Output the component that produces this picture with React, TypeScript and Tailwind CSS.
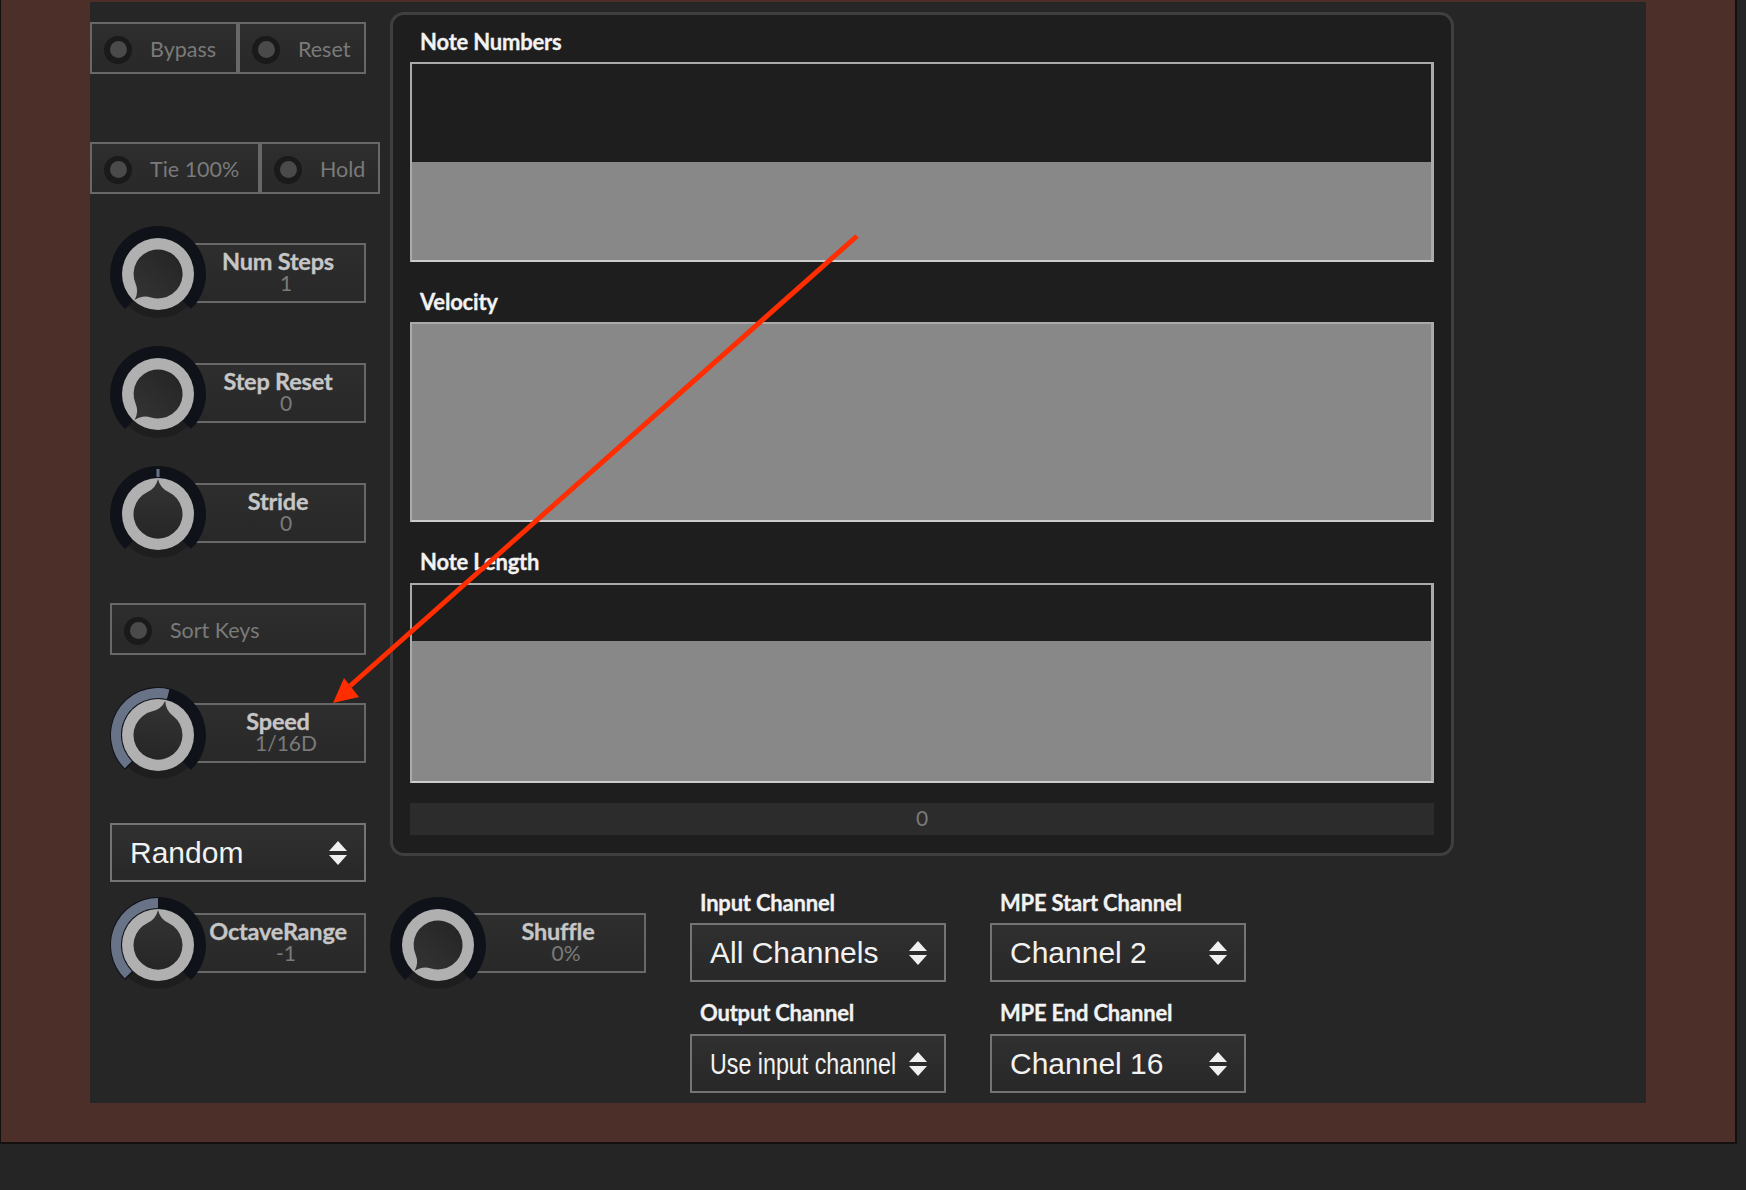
import React from "react";

const polar = (r: number, deg: number) => {
  const a = ((deg - 90) * Math.PI) / 180;
  return [48 + r * Math.cos(a), 48 + r * Math.sin(a)];
};

const arcBand = (r1: number, r2: number, from: number, to: number) => {
  const large = to - from > 180 ? 1 : 0;
  const [ax, ay] = polar(r2, from);
  const [bx, by] = polar(r2, to);
  const [cx, cy] = polar(r1, to);
  const [dx, dy] = polar(r1, from);
  return `M${ax} ${ay}A${r2} ${r2} 0 ${large} 1 ${bx} ${by}L${cx} ${cy}A${r1} ${r1} 0 ${large} 0 ${dx} ${dy}Z`;
};

function Knob({ pointer, value, tick }: { pointer: number; value?: number; tick?: boolean }) {
  return (
    <svg viewBox="0 0 96 100" className="relative z-10 w-[96px] h-[100px] shrink-0">
      <defs>
        <linearGradient id="knobFace" x1="0" y1="0" x2="0" y2="1">
          <stop offset="0" stopColor="#343434" />
          <stop offset="1" stopColor="#262626" />
        </linearGradient>
      </defs>
      <path d={arcBand(34, 44, 135, 225)} fill="#1e1e1e" />
      <path d={arcBand(35, 48, -137, 137)} fill="#10121a" />
      {value !== undefined && <path d={arcBand(37, 47, -135, value)} fill="#697387" />}
      {tick && <rect x="46.5" y="3" width="3" height="8" fill="#697387" />}
      <circle cx="48" cy="48" r="36" fill="#b0b0b0" />
      <g transform={`rotate(${pointer} 48 48)`}>
        <path d="M48 13Q46 22 37.5 26A24.5 24.5 0 1 0 58.5 26Q50 22 48 13Z" fill="url(#knobFace)" />
      </g>
    </svg>
  );
}

function Led() {
  return (
    <span className="flex items-center justify-center w-[28px] h-[28px] rounded-full bg-[#1a1a1a] shrink-0">
      <span className="block w-[17px] h-[17px] rounded-full bg-[#4a4a4a]" />
    </span>
  );
}

function Toggle({ label, width, className = "" }: { label: string; width: string; className?: string }) {
  return (
    <div
      className={`flex items-center gap-[18px] pl-[12px] pt-[3px] h-[52px] border-2 border-[#686868] bg-linear-to-b from-[#2e2e2e] to-[#282828] ${width} ${className}`}
    >
      <Led />
      <span className="text-[21.5px] text-[#7a7a7a] font-['Lato',sans-serif] whitespace-nowrap">{label}</span>
    </div>
  );
}

function KnobRow({
  label,
  val,
  pointer,
  value,
  tick,
  boxTop = "mt-[17px]",
  className = "",
}: {
  label: string;
  val: string;
  pointer: number;
  value?: number;
  tick?: boolean;
  boxTop?: string;
  className?: string;
}) {
  return (
    <div className={`flex w-[256px] h-[96px] ${className}`}>
      <Knob pointer={pointer} value={value} tick={tick} />
      <div
        className={`ml-[-16px] ${boxTop} flex-1 h-[60px] border-2 border-[#686868] bg-linear-to-b from-[#2e2e2e] to-[#282828] flex flex-col items-center justify-center pb-[2px] font-['Lato',sans-serif] whitespace-nowrap`}
      >
        <span className="text-[23.5px] leading-[22px] font-bold text-[#c6c6c6] tracking-[-0.2px] [-webkit-text-stroke:0.3px]">
          {label}
        </span>
        <span className="text-[21px] leading-[22px] text-[#7a7a7a] pl-[16px]">{val}</span>
      </div>
    </div>
  );
}

function Updown() {
  return (
    <svg viewBox="0 0 18 24" className="w-[18px] h-[24px] shrink-0">
      <path d="M9 0L18 10H0Z" fill="#f0f0f0" />
      <path d="M0 14H18L9 24Z" fill="#f0f0f0" />
    </svg>
  );
}

function Select({ text, squeeze }: { text: string; squeeze?: boolean }) {
  return (
    <div className="flex items-center justify-between w-[256px] h-[59px] border-2 border-[#747474] pl-[18px] pr-[17px] bg-linear-to-b from-[#303030] to-[#282828] font-['Liberation_Sans',sans-serif] text-[#f2f2f2] text-[30px]">
      {squeeze ? (
        <span className="whitespace-nowrap inline-block scale-x-[0.775] origin-left w-[185px] pb-[1px]">{text}</span>
      ) : (
        <span className="whitespace-nowrap pb-[1px]">{text}</span>
      )}
      <Updown />
    </div>
  );
}

function Slider({ fill }: { fill: string }) {
  return (
    <div className="flex flex-col w-[1024px] h-[200px] border-2 border-r-[3px] border-[#aaaaaa] border-b-[#cccccc] bg-[#1e1e1e]">
      <div className="flex-1" />
      <div className={`bg-[#888888] ${fill}`} />
    </div>
  );
}

function SectionLabel({ children, className = "" }: { children: React.ReactNode; className?: string }) {
  return (
    <div
      className={`h-[30px] leading-[30px] pl-[10px] text-[22px] font-bold text-[#f2f2f2] font-['Lato',sans-serif] tracking-[-0.2px] [-webkit-text-stroke:0.3px] ${className}`}
    >
      {children}
    </div>
  );
}

export default function App() {
  return (
    <div className="relative w-full h-[1190px] bg-[#252525] overflow-hidden">
      <div className="w-[1737px] h-[1144px] border-l border-r-2 border-b-2 border-[#141010] bg-[#4c2f28] pt-[2px] pl-[89px]">
        <div className="flex w-[1556px] h-[1101px] bg-[#262626]">
          <div className="flex flex-col w-[300px] pt-[20px]">
            <div className="flex">
              <Toggle label="Bypass" width="w-[148px]" />
              <Toggle label="Reset" width="w-[128px]" />
            </div>
            <div className="flex mt-[68px]">
              <Toggle label="Tie 100%" width="w-[170px]" />
              <Toggle label="Hold" width="w-[120px]" />
            </div>
            <div className="flex flex-col gap-[24px] mt-[32px] ml-[20px]">
              <KnobRow label="Num Steps" val="1" pointer={-138} />
              <KnobRow label="Step Reset" val="0" pointer={-138} />
              <KnobRow label="Stride" val="0" pointer={0} tick />
            </div>
            <Toggle label="Sort Keys" width="w-[256px]" className="ml-[20px] mt-[41px]" />
            <KnobRow
              label="Speed"
              val="1/16D"
              pointer={12}
              value={14}
              boxTop="mt-[16px]"
              className="ml-[20px] mt-[32px]"
            />
            <div className="ml-[20px] mt-[40px]">
              <Select text="Random" />
            </div>
            <KnobRow
              label="OctaveRange"
              val="-1"
              pointer={0}
              value={0}
              boxTop="mt-[16px]"
              className="ml-[20px] mt-[15px]"
            />
          </div>

          <div className="flex flex-col pt-[10px]">
            <div className="w-[1064px] h-[844px] rounded-[14px] border-[3px] border-[#3f3f3f] bg-[#1e1e1e] pl-[17px] pt-[12px]">
              <SectionLabel>Note Numbers</SectionLabel>
              <div className="mt-[5px]">
                <Slider fill="h-[98px]" />
              </div>
              <SectionLabel className="mt-[25px]">Velocity</SectionLabel>
              <div className="mt-[5px]">
                <Slider fill="h-[196px]" />
              </div>
              <SectionLabel className="mt-[25px]">Note Length</SectionLabel>
              <div className="mt-[6px]">
                <Slider fill="h-[140px]" />
              </div>
              <div className="mt-[20px] w-[1024px] h-[32px] bg-[#2c2c2c] flex items-center justify-center pb-[2px] text-[21px] text-[#7a7a7a] font-['Lato',sans-serif]">
                0
              </div>
            </div>

            <div className="flex mt-[32px]">
              <div className="pt-[9px] w-[300px]">
                <KnobRow label="Shuffle" val="0%" pointer={-138} boxTop="mt-[16px]" />
              </div>
              <div className="grid grid-cols-[256px_256px] gap-x-[44px]">
                <div>
                  <SectionLabel>Input Channel</SectionLabel>
                  <div className="mt-[5px]">
                    <Select text="All Channels" />
                  </div>
                </div>
                <div>
                  <SectionLabel>MPE Start Channel</SectionLabel>
                  <div className="mt-[5px]">
                    <Select text="Channel 2" />
                  </div>
                </div>
                <div className="mt-[16px]">
                  <SectionLabel>Output Channel</SectionLabel>
                  <div className="mt-[6px]">
                    <Select text="Use input channel" squeeze />
                  </div>
                </div>
                <div className="mt-[16px]">
                  <SectionLabel>MPE End Channel</SectionLabel>
                  <div className="mt-[6px]">
                    <Select text="Channel 16" />
                  </div>
                </div>
              </div>
            </div>
          </div>
        </div>
      </div>

      <svg viewBox="0 0 1746 1190" className="absolute top-0 left-0 w-[1746px] h-[1190px] pointer-events-none">
        <line x1="857" y1="236" x2="350" y2="686" stroke="#ff2d00" strokeWidth="5" />
        <path d="M333 703L344 678L359 697Z" fill="#ff2d00" />
      </svg>
    </div>
  );
}
